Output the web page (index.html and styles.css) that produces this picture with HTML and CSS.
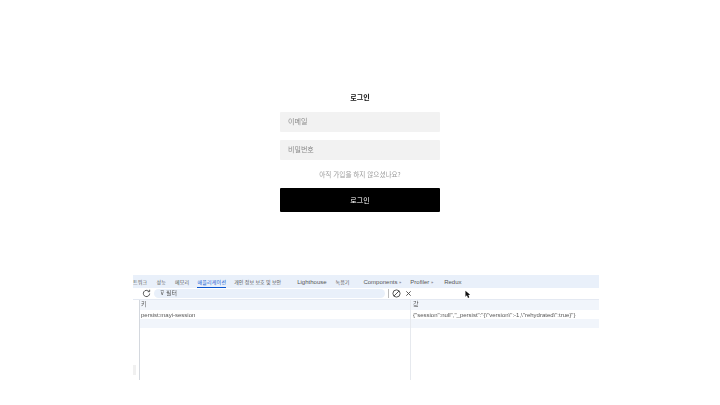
FILE: index.html
```html
<!DOCTYPE html>
<html lang="ko">
<head>
<meta charset="utf-8">
<title>로그인</title>
<link rel="stylesheet" href="styles.css">
</head>
<body>
<main class="login">
  <h1 class="login-title">로그인</h1>
  <div class="field">이메일</div>
  <div class="field">비밀번호</div>
  <p class="hint">아직 가입을 하지 않으셨나요?</p>
  <div class="submit">로그인</div>
</main>
<section class="devtools">
  <nav class="tabs">
    <span class="tab ko">트워크</span>
    <span class="tab ko">성능</span>
    <span class="tab ko">메모리</span>
    <span class="tab ko active">애플리케이션</span>
    <span class="tab ko privacy">개인 정보 보호 및 보안</span>
    <span class="tab">Lighthouse</span>
    <span class="tab ko recorder">녹음기</span>
    <span class="tab">Components <span class="more">»</span></span>
    <span class="tab">Profiler <span class="more">»</span></span>
    <span class="tab redux">Redux</span>
  </nav>
  <div class="toolbar">
    <svg class="reload" width="9" height="9" viewBox="0 0 10 10"><path d="M8.500 5a3.500 3.500 0 1 1-1-2.500M8.500 0.800v2.200H6.300" fill="none" stroke="#444" stroke-width="1"/></svg>
    <div class="filter"><span class="funnel">⊽</span>필터</div>
    <span class="sep"></span>
    <svg class="block" width="9" height="9" viewBox="0 0 9 9"><circle cx="4.500" cy="4.500" r="3.600" fill="none" stroke="#555"/><path d="M2 7L7 2" stroke="#555"/></svg>
    <svg class="close" width="7" height="7" viewBox="0 0 8 8"><path d="M1.500 1.500l5 5M6.500 1.500l-5 5" stroke="#444"/></svg>
  </div>
  <div class="table">
    <div class="side"><span class="grip"></span></div>
    <div class="grid">
      <div class="row head"><span class="key">키</span><span class="val">값</span></div>
      <div class="row"><span class="key">persist:mayi-session</span><span class="val">{"session":null","_persist":"{\"version\":-1,\"rehydrated\":true}"}</span></div>
      <div class="row stripe"><span class="key"></span><span class="val"></span></div>
      <div class="row fill"><span class="key"></span><span class="val"></span></div>
    </div>
  </div>
</section>
<svg class="cursor" width="6" height="9" viewBox="0 0 7 10"><path d="M0.500 0.500L0.500 7.500L2.300 6L3.500 9L5 8.300L3.800 5.500L6 5.300Z" fill="#111"/></svg>
</body>
</html>
```
FILE: styles.css
```css
html, body { margin: 0; padding: 0; background: #fff; }
body { width: 720px; height: 405px; overflow: hidden; font-family: "Noto Sans CJK KR", "Liberation Sans", sans-serif; position: relative; }

.login { width: 160px; margin: 0 auto; padding-top: 91px; display: flex; flex-direction: column; align-items: stretch; filter: blur(0.3px); }
.login-title { margin: 0 0 9px; height: 12px; line-height: 12px; font-size: 7px; font-weight: 700; text-align: center; color: #111; }
.field { height: 20px; line-height: 19px; margin-bottom: 8px; padding-left: 8px; background: #f2f2f2; border-radius: 1px; font-size: 7px; color: #8a8a8a; }
.hint { margin: 0 0 8px; height: 12px; line-height: 12px; font-size: 6.600px; text-align: center; color: #9a9a9a; }
.submit { height: 24px; line-height: 24px; background: #000; color: #fff; border-radius: 1px; text-align: center; font-size: 7px; }

.devtools { width: 466px; margin: 63px 0 0 133px; font-family: "Liberation Sans", "Noto Sans CJK KR", sans-serif; font-size: 6px; color: #555; filter: blur(0.3px); }
.tabs { display: flex; gap: 9px; height: 13px; line-height: 14px; background: #e9f0fa; white-space: nowrap; overflow: hidden; }
.tab { font-size: 6px; color: #555; }
.ko { font-size: 5px; letter-spacing: 0.200px; }
.more { font-size: 4px; }
.active { margin-left: -1px; color: #0b57d0; box-shadow: inset 0 -1px 0 #0b57d0; }
.privacy { margin-left: -1px; margin-right: 7px; letter-spacing: 0; }
.recorder { margin-right: 5px; letter-spacing: 0; }
.redux { margin-left: 2px; }
.toolbar { display: flex; align-items: center; height: 11px; border-bottom: 1px solid #e4e9f2; }
.reload { margin-left: 9px; }
.filter { width: 225px; height: 9px; line-height: 9px; margin-left: 3px; padding-left: 6px; background: #e9f0fa; border-radius: 5px; font-size: 6px; }
.funnel { margin-right: 2px; }
.sep { width: 1px; height: 9px; margin-left: 3px; background: #bbb; }
.block { margin-left: 3px; }
.close { margin-left: 4px; }
.table { display: flex; height: 80px; }
.side { width: 6px; border-right: 1px solid #d4d8de; display: flex; align-items: flex-end; padding-bottom: 5px; height: 75px; }
.grip { width: 3px; height: 10px; background: #f0f0f0; }
.grid { flex: 1; display: flex; flex-direction: column; }
.row { display: flex; height: 10px; line-height: 9px; flex: none; }
.row + .row { height: 9px; line-height: 11px; }
.head { background: #f1f5fb; }
.row.stripe { background: #f1f5fb; height: 9px; }
.row.fill { flex: 1; }
.key { width: 270px; padding-left: 1px; box-sizing: border-box; overflow: hidden; white-space: nowrap; }
.val { flex: 1; padding-left: 2px; border-left: 1px solid #e6e9ee; overflow: hidden; white-space: nowrap; }

.cursor { position: absolute; left: 465px; top: 290px; }
```
